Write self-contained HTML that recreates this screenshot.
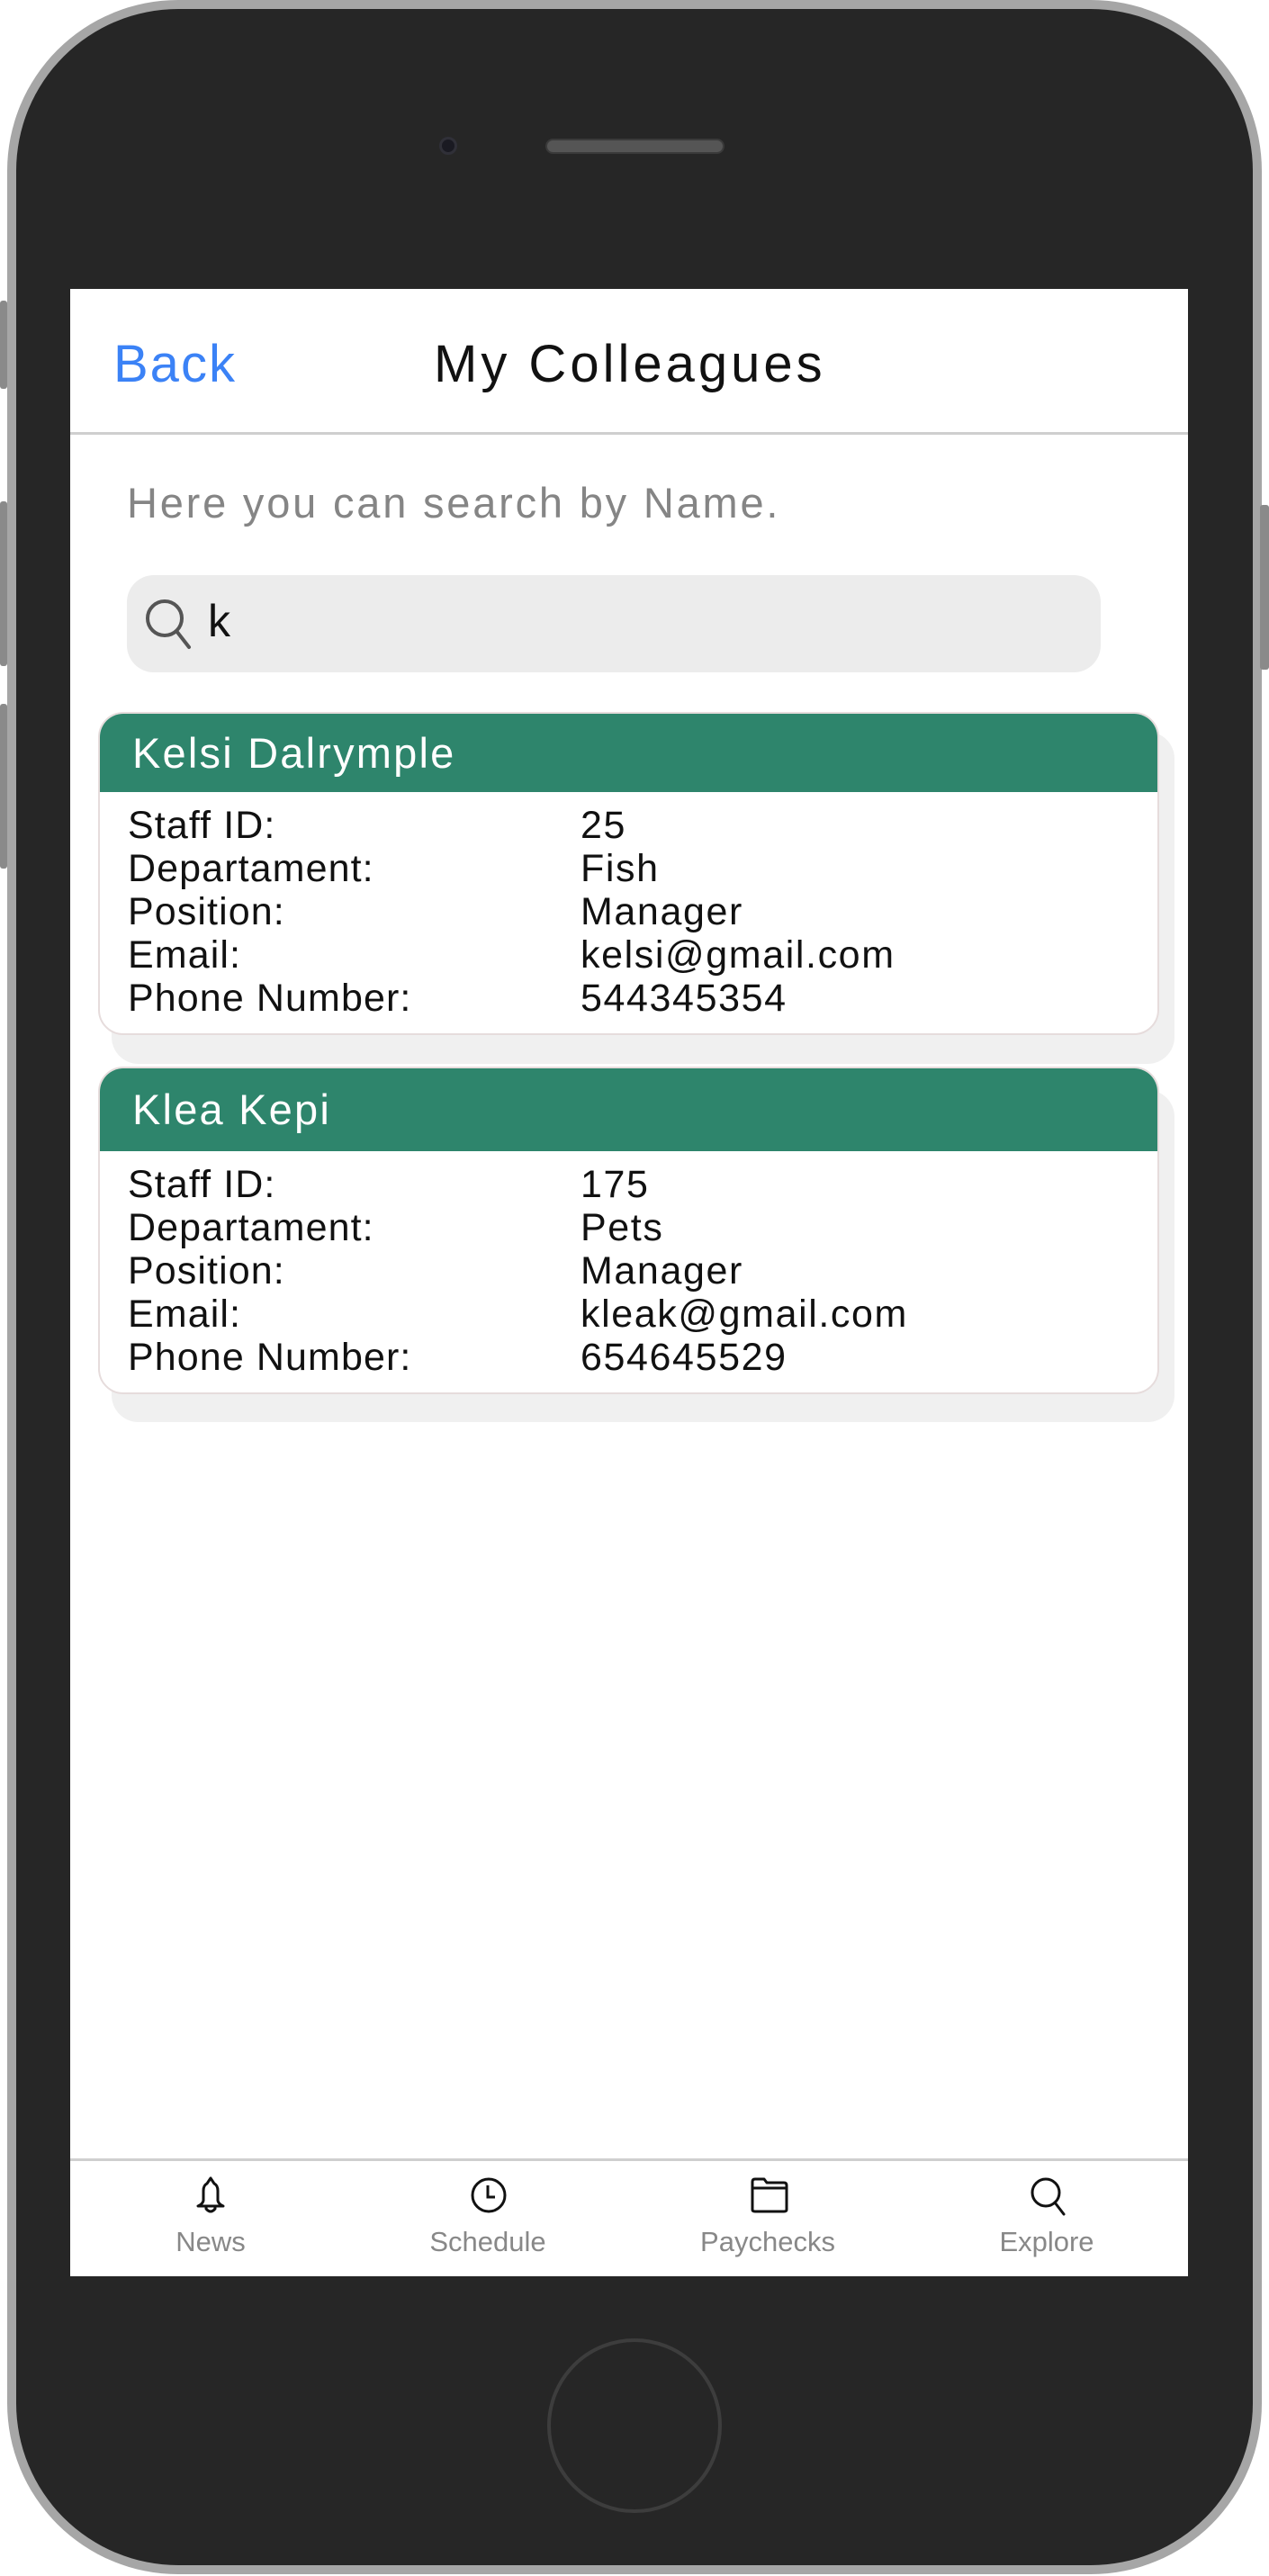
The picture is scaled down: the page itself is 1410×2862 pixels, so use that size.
<!DOCTYPE html>
<html><head><meta charset="utf-8">
<style>
*{margin:0;padding:0;box-sizing:border-box}
html,body{width:1410px;height:2862px;background:#fff;overflow:hidden;font-family:"Liberation Sans",sans-serif}
.phone{position:absolute;left:8px;top:0;width:1394px;height:2860px;border-radius:190px;background:#a6a6a6}
.phone2{position:absolute;left:18px;top:10px;width:1374px;height:2840px;border-radius:180px;background:#262626}
.btn{position:absolute;background:#8a8a8a;border-radius:3px}
.screen{position:absolute;left:78px;top:321px;width:1242px;height:2208px;background:#fff;overflow:hidden}
.abs{position:absolute}
.hdrline{position:absolute;left:0;top:159px;width:1242px;height:3px;background:#cfcfcf}
.back{left:48px;top:50px;font-size:58px;color:#3b82f6;letter-spacing:2px}
.title{left:404px;top:50px;font-size:58px;color:#111;letter-spacing:4px}
.hint{left:63px;top:210px;font-size:47px;color:#858585;letter-spacing:2.8px}
.search{left:63px;top:318px;width:1082px;height:108px;border-radius:30px;background:#ececec}
.shadow{position:absolute;border-radius:30px;background:#f0f0f0}
.card{position:absolute;left:31px;width:1179px;background:#fff;border:2px solid #e6dcdc;border-radius:28px;overflow:hidden}
.ch{height:87px;background:#2e856c;color:#fff;font-size:47px;padding-left:36px;line-height:87px;letter-spacing:2.2px}
.rows{position:relative;padding-top:13px}
.row{height:48px;font-size:43px;line-height:48px;color:#111;position:relative}
.row .l{position:absolute;left:31px;letter-spacing:1.1px}
.row .v{position:absolute;left:534px;letter-spacing:1.6px}
.navline{position:absolute;left:0;top:2077px;width:1242px;height:3px;background:#cfcfcf}
.nav{position:absolute;top:2152px;font-size:31px;color:#888;width:300px;text-align:center}
.ic{position:absolute;top:2097px}
</style></head><body>
<div class="phone"></div>
<div class="phone2"></div>
<div class="btn" style="left:0;top:334px;width:8px;height:98px"></div>
<div class="btn" style="left:0;top:557px;width:8px;height:183px"></div>
<div class="btn" style="left:0;top:782px;width:8px;height:183px"></div>
<div class="btn" style="left:1400px;top:561px;width:10px;height:183px"></div>
<div class="abs" style="left:488px;top:152px;width:20px;height:20px;border-radius:50%;background:#1a1a22;border:3px solid #303038"></div>
<div class="abs" style="left:606px;top:154px;width:199px;height:17px;border-radius:9px;background:#555;border:2px solid #3a3a3a"></div>
<div class="abs" style="left:608px;top:2598px;width:194px;height:194px;border-radius:50%;border:4px solid #3d3d3d"></div>

<div class="screen">
  <div class="abs back">Back</div>
  <div class="abs title">My Colleagues</div>
  <div class="hdrline"></div>
  <div class="abs hint">Here you can search by Name.</div>
  <div class="abs search">
    <svg class="abs" style="left:18px;top:24px" width="56" height="60" viewBox="0 0 56 60"><circle cx="24" cy="24" r="19" fill="none" stroke="#555" stroke-width="4"/><line x1="37" y1="38" x2="51" y2="56" stroke="#555" stroke-width="4" stroke-linecap="round"/></svg>
    <div class="abs" style="left:90px;top:22px;font-size:50px;color:#111">k</div>
  </div>

  <div class="shadow" style="left:46px;top:492px;width:1181px;height:369px"></div>
  <div class="card" style="top:470px;height:359px">
    <div class="ch">Kelsi Dalrymple</div>
    <div class="rows">
      <div class="row"><span class="l">Staff ID:</span><span class="v">25</span></div>
      <div class="row"><span class="l">Departament:</span><span class="v">Fish</span></div>
      <div class="row"><span class="l">Position:</span><span class="v">Manager</span></div>
      <div class="row"><span class="l">Email:</span><span class="v">kelsi@gmail.com</span></div>
      <div class="row"><span class="l">Phone Number:</span><span class="v">544345354</span></div>
    </div>
  </div>

  <div class="shadow" style="left:46px;top:890px;width:1181px;height:369px"></div>
  <div class="card" style="top:864px;height:364px">
    <div class="ch" style="height:92px;line-height:92px">Klea Kepi</div>
    <div class="rows">
      <div class="row"><span class="l">Staff ID:</span><span class="v">175</span></div>
      <div class="row"><span class="l">Departament:</span><span class="v">Pets</span></div>
      <div class="row"><span class="l">Position:</span><span class="v">Manager</span></div>
      <div class="row"><span class="l">Email:</span><span class="v">kleak@gmail.com</span></div>
      <div class="row"><span class="l">Phone Number:</span><span class="v">654645529</span></div>
    </div>
  </div>

  <div class="navline"></div>
  <svg class="ic" style="left:136px" width="40" height="42" viewBox="0 0 40 42" fill="none" stroke="#111" stroke-width="3" stroke-linejoin="round"><path d="M20 2 L16 8 Q12 10 12 16 L12 27 Q11 31 6 33 L34 33 Q29 31 28 27 L28 16 Q28 10 24 8 Z"/><path d="M15 33 L15 36 Q20 42 25 36 L25 33"/></svg>
  <svg class="ic" style="left:444px" width="42" height="42" viewBox="0 0 42 42" fill="none" stroke="#111" stroke-width="3"><circle cx="21" cy="21" r="18"/><path d="M20 10 V23 H28"/></svg>
  <svg class="ic" style="left:755px" width="44" height="42" viewBox="0 0 44 42" fill="none" stroke="#111" stroke-width="3" stroke-linejoin="round"><path d="M3 6 Q3 3 6 3 L16 3 L19 7 L38 7 Q41 7 41 10 L41 37 Q41 39 38 39 L6 39 Q3 39 3 37 Z"/><path d="M3 13 H41"/></svg>
  <svg class="ic" style="left:1066px" width="42" height="44" viewBox="0 0 42 44" fill="none" stroke="#111" stroke-width="3"><circle cx="18" cy="18" r="15"/><path d="M28 29 L38 42" stroke-linecap="round"/></svg>
  <div class="nav" style="left:6px">News</div>
  <div class="nav" style="left:314px">Schedule</div>
  <div class="nav" style="left:625px">Paychecks</div>
  <div class="nav" style="left:935px">Explore</div>
</div>
</body></html>
